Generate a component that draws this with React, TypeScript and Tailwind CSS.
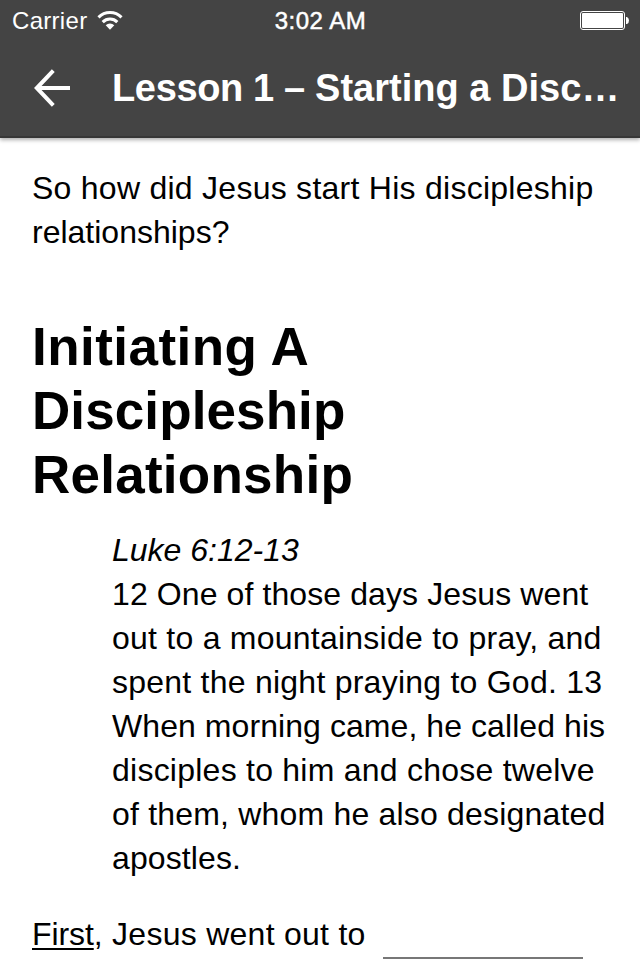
const verse = [
  { text: "12 One of those days Jesus went", tracking: "tracking-[0.1px]" },
  { text: "out to a mountainside to pray, and", tracking: "tracking-[0.24px]" },
  { text: "spent the night praying to God. 13", tracking: "tracking-[0.24px]" },
  { text: "When morning came, he called his", tracking: "tracking-[0.07px]" },
  { text: "disciples to him and chose twelve", tracking: "tracking-[0.24px]" },
  { text: "of them, whom he also designated", tracking: "tracking-[0.19px]" },
  { text: "apostles.", tracking: "tracking-[0.1px]" },
];

function WifiIcon() {
  return (
    <svg width="26" height="20" viewBox="0 0 26 20" fill="none" stroke="white" strokeWidth="3.1">
      <path d="M1.5 6.3a16.3 16.3 0 0 1 23 0M5.7 11.1a10.3 10.3 0 0 1 14.6 0" />
      <path d="M13 18.7l-4.3-4.5a6.1 6.1 0 0 1 8.6 0z" fill="white" stroke="none" />
    </svg>
  );
}

function BatteryIcon() {
  return (
    <svg width="49" height="19" viewBox="0 0 49 19">
      <rect x="0.5" y="0.5" width="44" height="18" rx="2.5" fill="none" stroke="white" />
      <rect x="2" y="2" width="41" height="15" rx="1" fill="white" />
      <path d="M46 6h1q2 1 2 3.5T47 13h-1z" fill="white" />
    </svg>
  );
}

export default function App() {
  return (
    <div className="h-[960px] w-[640px] overflow-hidden bg-white font-['Liberation_Sans',sans-serif] text-black">
      <header className="h-[138px] border-b-2 border-[#373737] bg-[#444444] text-white shadow-[0_2px_4px_rgba(0,0,0,0.32)]">
        <div className="grid h-10 grid-cols-3 items-center pl-3 pr-[11px] pt-[2px] text-[24px]">
          <div className="flex items-center gap-[10px]">
            <span className="tracking-[0.3px]">Carrier</span>
            <WifiIcon />
          </div>
          <span className="text-center tracking-[0.5px] [-webkit-text-stroke:0.5px_white]">3:02 AM</span>
          <span className="justify-self-end pb-[2px]"><BatteryIcon /></span>
        </div>
        <div className="flex h-24 items-center">
          <svg className="ml-[34px]" width="36" height="38" viewBox="0 0 36 38" fill="none" stroke="white" strokeWidth="4">
            <path d="M36 19H4M19.3 1.7L2.8 19l16.5 17.3" />
          </svg>
          <h1 className="ml-[42px] whitespace-nowrap text-[38px] font-bold">
            <span className="tracking-[-0.36px]">Lesson 1 – </span>
            <span className="tracking-[0.02px]">Starting a Disc…</span>
          </h1>
        </div>
      </header>
      <main className="px-8 pt-7 text-[32px] leading-[44px]">
        <p className="whitespace-nowrap"><span className="tracking-[0.26px]">So how did Jesus start His discipleship</span><br />relationships?</p>
        <h2 className="mt-[61px] text-[53px] font-bold leading-[64px]">
          <span className="tracking-[0.45px]">Initiating A</span><br />
          <span className="tracking-[0.1px]">Discipleship</span><br />
          <span className="tracking-[0.25px]">Relationship</span>
        </h2>
        <blockquote className="ml-20 mt-[21px] whitespace-nowrap">
          <em>Luke 6:12-13</em>
          {verse.map((line) => (
            <p key={line.text} className={line.tracking}>{line.text}</p>
          ))}
        </blockquote>
        <div className="mt-8 flex whitespace-nowrap">
          <p className="w-[335px] tracking-[0.27px]"><span className="tracking-[-0.1px] underline decoration-2 underline-offset-[3px]">First</span>, Jesus went out to</p>
          <span className="ml-4 h-[47px] w-[200px] border-b-2 border-[#777]" />
        </div>
      </main>
    </div>
  );
}
